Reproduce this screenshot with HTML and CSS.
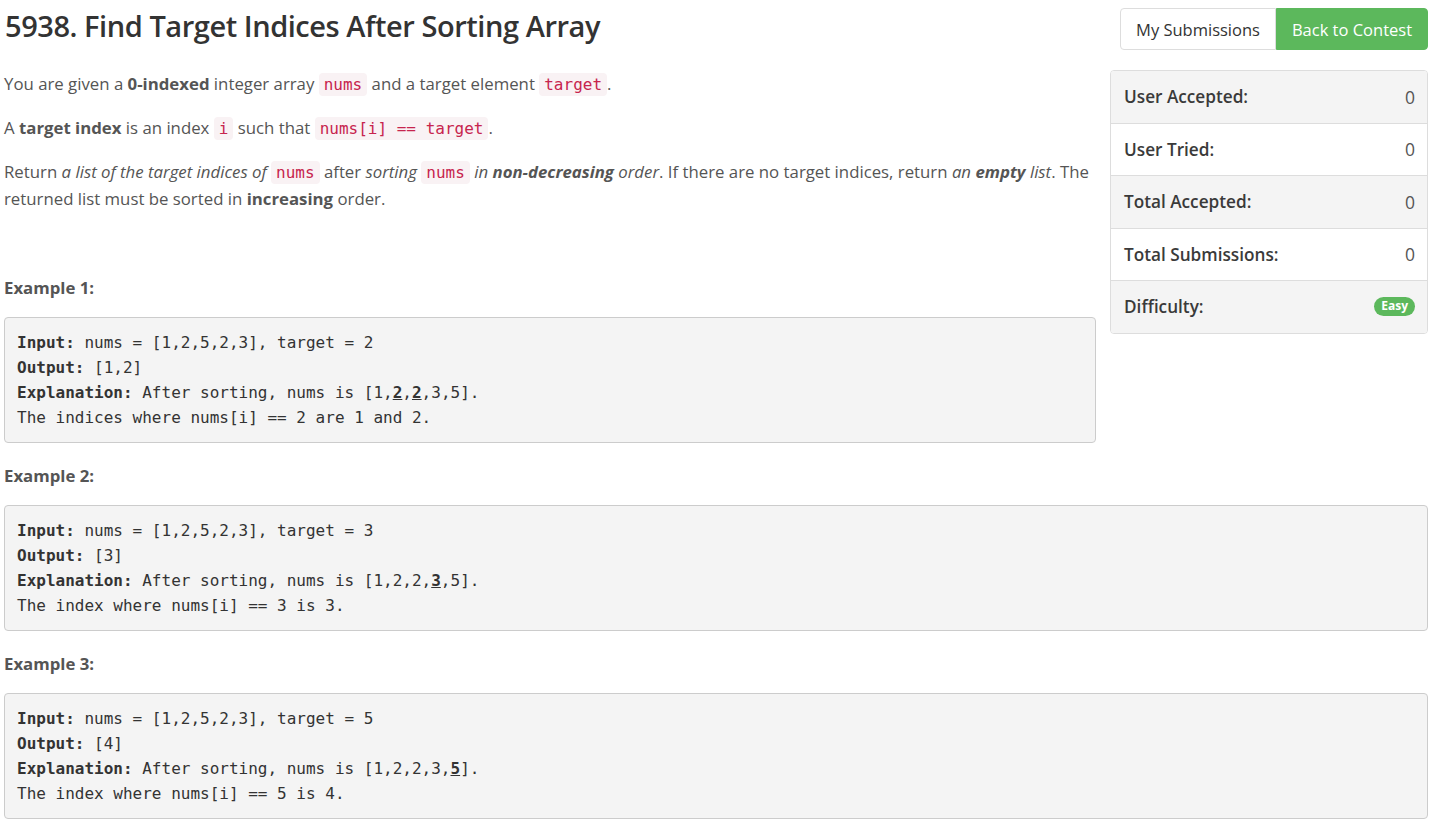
FILE: index.html
```html
<!DOCTYPE html>
<html>
<head>
<meta charset="utf-8">
<link rel="stylesheet" href="styles.css">
</head>
<body>
<div class="page">
  <div class="header">
    <h3 class="title">5938. Find Target Indices After Sorting Array</h3>
    <div class="btn-group">
      <a class="btn btn-default">My Submissions</a>
      <a class="btn btn-success">Back to Contest</a>
    </div>
  </div>
  <div class="content">
    <div class="sidebar">
      <div class="row shade"><span class="label">User Accepted:</span><span class="value">0</span></div>
      <div class="row"><span class="label">User Tried:</span><span class="value">0</span></div>
      <div class="row shade"><span class="label">Total Accepted:</span><span class="value">0</span></div>
      <div class="row"><span class="label">Total Submissions:</span><span class="value">0</span></div>
      <div class="row shade"><span class="label">Difficulty:</span><span class="badge">Easy</span></div>
    </div>
    <div class="desc">
      <p>You are given a <strong>0-indexed</strong> integer array <code>nums</code> and a target element <code>target</code>.</p>
      <p>A <strong>target index</strong> is an index <code>i</code> such that <code>nums[i] == target</code>.</p>
      <p>Return <em>a list of the target indices of</em> <code>nums</code> after<em> sorting </em><code>nums</code><em> in <strong>non-decreasing</strong> order</em>. If there are no target indices, return <em>an <strong>empty</strong> list</em>. The returned list must be sorted in <strong>increasing</strong> order.</p>
      <p class="example-title first">Example 1:</p>
<pre><strong>Input:</strong> nums = [1,2,5,2,3], target = 2
<strong>Output:</strong> [1,2]
<strong>Explanation:</strong> After sorting, nums is [1,<u><strong>2</strong></u>,<u><strong>2</strong></u>,3,5].
The indices where nums[i] == 2 are 1 and 2.</pre>
      <p class="example-title">Example 2:</p>
<pre><strong>Input:</strong> nums = [1,2,5,2,3], target = 3
<strong>Output:</strong> [3]
<strong>Explanation:</strong> After sorting, nums is [1,2,2,<u><strong>3</strong></u>,5].
The index where nums[i] == 3 is 3.</pre>
      <p class="example-title">Example 3:</p>
<pre><strong>Input:</strong> nums = [1,2,5,2,3], target = 5
<strong>Output:</strong> [4]
<strong>Explanation:</strong> After sorting, nums is [1,2,2,3,<u><strong>5</strong></u>].
The index where nums[i] == 5 is 4.</pre>
    </div>
  </div>
</div>
</body>
</html>
```
FILE: styles.css
```css
html, body {
  margin: 0;
  padding: 0;
  background: #fff;
}
body {
  font-family: "Open Sans", "Noto Sans", sans-serif;
  color: #555;
  font-size: 16.8px;
}
.page {
  margin: 0 8px 0 4px;
}
.header {
  display: flex;
  justify-content: space-between;
  align-items: flex-start;
  height: 70px;
}
.title {
  margin: 7px 0 0 1px;
  font-size: 29px;
  font-weight: 600;
  color: #333;
  line-height: 38px;
  letter-spacing: -0.45px;
}
.btn-group {
  display: flex;
  margin-top: 8px;
}
.btn {
  display: block;
  height: 42px;
  box-sizing: border-box;
  font-size: 16.5px;
  line-height: 42px;
  border: 1px solid #ddd;
  text-align: center;
  padding: 0;
}
.btn-default {
  width: 156px;
  background: #fff;
  color: #333;
  border-radius: 4px 0 0 4px;
  line-height: 41px;
}
.btn-success {
  width: 152px;
  background: #5cb85c;
  border-color: #5cb85c;
  color: #fff;
  border-radius: 0 4px 4px 0;
  line-height: 41px;
}
.sidebar {
  float: right;
  width: 316px;
  margin-left: 14px;
  border: 1px solid #ddd;
  border-radius: 4px;
  overflow: hidden;
}
.row {
  display: flex;
  justify-content: space-between;
  align-items: center;
  height: 51.5px;
  padding: 0 12px 0 13px;
  border-top: 1px solid #ddd;
  font-size: 17.2px;
  color: #333;
  background: #fff;
}
.row:first-child {
  border-top: 0;
}
.row.shade {
  background: #f4f4f4;
}
.label {
  font-weight: 600;
  color: #3a3a3a;
}
.value {
  color: #555;
  font-size: 17.5px;
}
.badge {
  background: #5cb85c;
  color: #fff;
  font-size: 12px;
  font-weight: 700;
  border-radius: 10px;
  padding: 1px 7px 2px;
  line-height: 16px;
}
.desc p {
  margin: 0 0 17px;
  line-height: 27px;
}
code {
  font-family: "DejaVu Sans Mono", monospace;
  font-size: 16px;
  line-height: 20px;
  color: #c7254e;
  background: #f9f2f4;
  padding: 2px 5px;
  border-radius: 4px;
}
.desc p.example-title {
  font-weight: 700;
  color: #555;
  margin: 19px 0 16px;
}
.desc p.example-title.first {
  margin-top: 62px;
}
pre {
  overflow: auto;
  margin: 0;
  padding: 12px;
  background: #f4f4f4;
  border: 1px solid #ccc;
  border-radius: 4px;
  font-family: "DejaVu Sans Mono", monospace;
  font-size: 16px;
  line-height: 25px;
  color: #333;
}
pre strong {
  color: #333;
}
```
